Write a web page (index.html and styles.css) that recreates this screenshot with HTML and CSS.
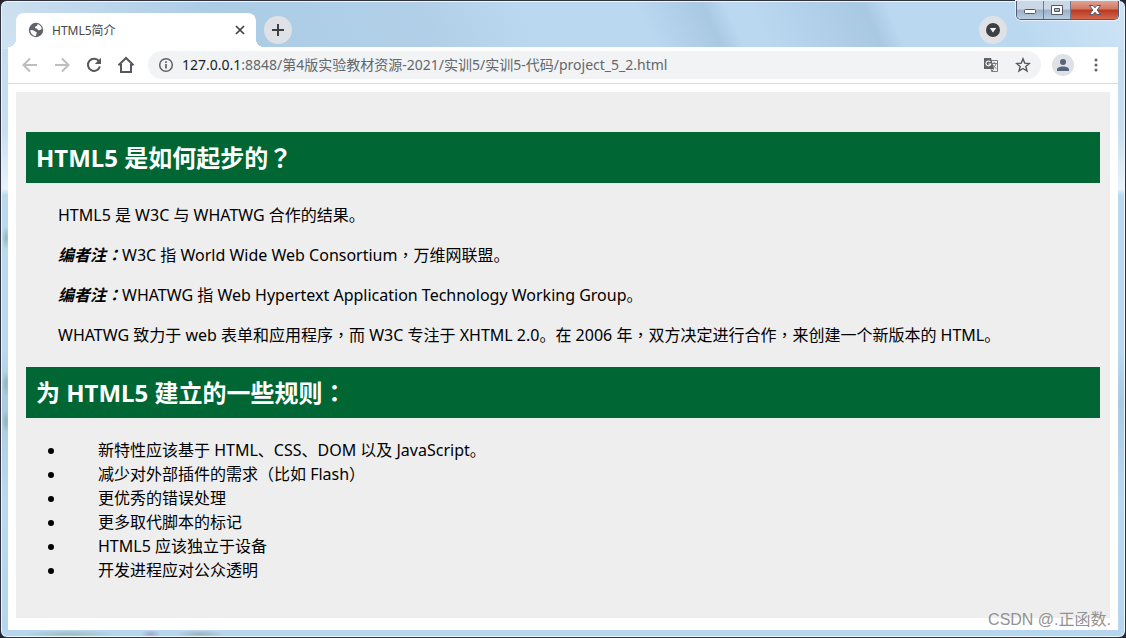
FILE: index.html
```
<!DOCTYPE html>
<html lang="zh-CN">
<head>
<meta charset="utf-8">
<title>HTML5简介</title>
<link rel="stylesheet" href="styles.css">
</head>
<body>
<div class="window">
  <header class="titlebar">
    <div class="tab">
      <svg class="globe" viewBox="0 0 16 16" aria-hidden="true"><circle cx="8" cy="8" r="7.2" fill="#5f6368"/><path d="M2.300 8 5 8.200 7.200 9.600 8.900 10.400 8.300 12 8 14C4.900 14 2.400 11.500 2.300 8ZM9.500 1.900 9.200 3.700 7.300 4.600 7 6.200 9 6.600 10.200 8.200 12 8.100 13.800 7C13.500 4.400 11.800 2.400 9.500 1.900Z" fill="#fff"/></svg>
      <span class="tab-title">HTML5简介</span>
      <button class="plain close-tab" aria-label="关闭标签页"><svg width="16" height="16" viewBox="0 0 16 16"><path d="m4 4 8 8m0-8-8 8" stroke="#3c4043" stroke-width="1.700"/></svg></button>
    </div>
    <button class="round new-tab" aria-label="新标签页"><svg width="16" height="16" viewBox="0 0 16 16"><path d="M8 2v12M2 8h12" stroke="#3c4043" stroke-width="2"/></svg></button>
    <button class="round tab-search" aria-label="搜索标签页"><svg width="16" height="16" viewBox="0 0 16 16"><circle cx="8" cy="8" r="7" fill="#3c4043"/><path d="M4.800 6h6.400L8 10.500Z" fill="#fff"/></svg></button>
    <div class="controls">
      <button aria-label="最小化"><svg width="14" height="10" viewBox="0 0 14 10"><rect x="1.500" y="4.500" width="11" height="4" rx="1" fill="#fff" stroke="#535666"/></svg></button>
      <button aria-label="最大化"><svg width="14" height="12" viewBox="0 0 14 12"><path d="M1.500 1.500h11v9h-11Zm3 3v3h5v-3Z" fill="#fff" fill-rule="evenodd" stroke="#535666"/></svg></button>
      <button class="close" aria-label="关闭"><svg width="14" height="12" viewBox="0 0 14 12"><path d="M1.500 1.500h3.700L7 3.800l1.800-2.300h3.700L9.200 6l3.300 4.500H8.800L7 8.200l-1.800 2.300H1.500L4.800 6Z" fill="#fff" stroke="#535666"/></svg></button>
    </div>
  </header>
  <main class="client">
    <nav class="toolbar">
      <button class="plain" aria-label="后退"><svg width="18" height="18" viewBox="0 0 18 18" fill="none" stroke="#bdbec0" stroke-width="2"><path d="M16 9H3M9 2.500 2.500 9 9 15.500"/></svg></button>
      <button class="plain" aria-label="前进"><svg width="18" height="18" viewBox="0 0 18 18" fill="none" stroke="#bdbec0" stroke-width="2"><path d="M2 9h13M9 2.500 15.500 9 9 15.500"/></svg></button>
      <button class="plain" aria-label="重新加载"><svg width="18" height="18" viewBox="0 0 18 18"><path d="M14 5.200A6.100 6.100 0 1 0 14.900 10.500" fill="none" stroke="#55585c" stroke-width="2"/><path d="M16 1.800V8H9.800Z" fill="#55585c"/></svg></button>
      <button class="plain" aria-label="主页"><svg width="18" height="18" viewBox="0 0 18 18"><path d="M1.500 9.300 9 2l7.500 7.300M4 8v8h10V8" fill="none" stroke="#55585c" stroke-width="2"/></svg></button>
      <div class="address">
        <svg width="16" height="16" viewBox="0 0 16 16"><circle cx="8" cy="8" r="6.300" fill="none" stroke="#5f6368" stroke-width="1.500"/><path d="M8 7v4.500M8 4.300v1.600" stroke="#5f6368" stroke-width="1.700"/></svg>
        <div class="url"><span class="host">127.0.0.1</span>:8848/第4版实验教材资源-2021/实训5/实训5-代码/project_5_2.html</div>
        <button class="plain" aria-label="翻译此页"><svg width="16" height="16" viewBox="0 0 16 16"><path d="M5.500 3.500h9v11h-6" fill="#f1f3f4" stroke="#777a7e"/><path d="M1 1h7l3 11H1Z" fill="#5f6368"/><path d="M7.300 5A2.400 2.400 0 1 0 7.700 7H5.500" fill="none" stroke="#fff" stroke-width="1.100"/><path d="M8.500 6.500h5.500M11.200 5v1.500M13 6.500c-.5 2-1.500 3.500-3 4.500M10 8c.800 1.500 2 2.800 3.500 3.700M8 12l1 2.500 1.500-2.500" fill="none" stroke="#777a7e"/></svg></button>
        <button class="plain" aria-label="收藏"><svg width="16" height="16" viewBox="0 0 16 16"><path d="m8 1.800 1.700 4.300 4.700.4-3.600 3 1.200 4.500L8 11.500 4 14l1.200-4.500-3.600-3 4.700-.4Z" fill="none" stroke="#55585c" stroke-width="1.400"/></svg></button>
      </div>
      <button class="avatar" aria-label="用户"><svg width="14" height="14" viewBox="0 0 14 14" fill="#55647a"><circle cx="7" cy="4" r="3"/><path d="M1 13v-1.500C1 9.500 4 8.500 7 8.500s6 1 6 3V13Z"/></svg></button>
      <button class="plain menu" aria-label="菜单"><svg width="4" height="16" viewBox="0 0 4 16" fill="#5f6368"><circle cx="2" cy="3" r="1.500"/><circle cx="2" cy="8" r="1.500"/><circle cx="2" cy="13" r="1.500"/></svg></button>
    </nav>
    <article class="page">
      <h2>HTML5 是如何起步的<span class="mid" lang="zh-TW">？</span></h2>
      <p>HTML5 是 W3C 与 WHATWG 合作的结果。</p>
      <p><em>编者注<span class="mid" lang="zh-TW">：</span></em>W3C 指 World Wide Web Consortium<span class="mid" lang="zh-TW">，</span>万维网联盟。</p>
      <p><em>编者注<span class="mid" lang="zh-TW">：</span></em>WHATWG 指 Web Hypertext Application Technology Working Group。</p>
      <p>WHATWG 致力于 web 表单和应用程序<span class="mid" lang="zh-TW">，</span>而 W3C 专注于 XHTML 2.0。在 2006 年<span class="mid" lang="zh-TW">，</span>双方决定进行合作<span class="mid" lang="zh-TW">，</span>来创建一个新版本的 HTML。</p>
      <h2>为 HTML5 建立的一些规则<span class="mid" lang="zh-TW">：</span></h2>
      <ul>
        <li>新特性应该基于 HTML、CSS、DOM 以及 JavaScript。</li>
        <li>减少对外部插件的需求（比如 Flash）</li>
        <li>更优秀的错误处理</li>
        <li>更多取代脚本的标记</li>
        <li>HTML5 应该独立于设备</li>
        <li>开发进程应对公众透明</li>
      </ul>
    </article>
  </main>
  <div class="watermark">CSDN @.正函数.</div>
</div>
</body>
</html>
```
FILE: styles.css
```
* { box-sizing: border-box; }
html { background: #23242e; }
body {
  margin: 0;
  font-family: "Noto Sans", "Noto Sans CJK SC", sans-serif;
  color: #000;
}
button {
  display: grid;
  place-items: center;
  padding: 0;
  border: 0;
  font: inherit;
}
svg { display: block; flex: none; }

.window {
  position: relative;
  display: flex;
  flex-direction: column;
  min-height: 100vh;
  padding: 0 6px 6px;
  border: 1px solid #30323e;
  border-radius: 7px;
  box-shadow: inset 0 0 0 1px #edf6fd;
  background:
    radial-gradient(ellipse at center, #93b7b6 0, transparent 70%) 1px 225px / 8px 24px no-repeat,
    radial-gradient(ellipse at center, #8fb4b6 0, transparent 70%) 1px 370px / 8px 26px no-repeat,
    radial-gradient(ellipse at center, #8fb4b6 0, transparent 70%) 1px 408px / 8px 24px no-repeat,
    radial-gradient(ellipse at center, #9dbdc0 0, transparent 70%) 24px 629px / 90px 8px no-repeat,
    radial-gradient(ellipse at center, #a5a5cc 0, transparent 70%) 140px 629px / 20px 8px no-repeat,
    radial-gradient(ellipse at center, #9fb2bb 0, transparent 70%) 174px 629px / 50px 8px no-repeat,
    linear-gradient(65deg, #cfe2f1 0, #accce6 20%, #b1d0e8 38%, #bad9f1 47%, #bad9f1 57%, #a9c8e1 63%, #bad9f1 65%, #bad9f1 67%, #a9c8e1 77%, #bad9f1 79%, #bad9f1 90%, #cfe4f5 100%) 0 0 / 100% 48px no-repeat,
    linear-gradient(#c3dcf1 48px, #c8dff2 130px, #e8f2fa 188px, #bad9f1 194px, #bad9f1 350px, #aacae3 400px, #bad9f1 500px, #b6d6ee 100%);
}

.titlebar {
  display: flex;
  align-items: flex-start;
  height: 46px;
  padding-left: 9px;
}
.tab {
  position: relative;
  display: flex;
  align-items: center;
  width: 240px;
  height: 34px;
  margin-top: 12px;
  padding: 0 8px 0 12px;
  border-radius: 8px 8px 0 0;
  background: #fff;
}
.tab::before, .tab::after {
  content: "";
  position: absolute;
  bottom: 0;
  width: 8px;
  height: 8px;
}
.tab::before {
  right: 100%;
  background: radial-gradient(circle at 0 0, transparent 8px, #fff 8px);
}
.tab::after {
  left: 100%;
  background: radial-gradient(circle at 100% 0, transparent 8px, #fff 8px);
}
.globe { width: 16px; height: 16px; }
.tab-title {
  flex: 1;
  margin-left: 8px;
  font-size: 12px;
  color: #45474a;
}
.plain { background: transparent; }
.round {
  width: 28px;
  height: 28px;
  margin-top: 15px;
  border-radius: 50%;
  background: #dee1e6;
}
.new-tab { margin-left: 8px; }
.tab-search { margin-left: auto; margin-right: 9px; }
.controls {
  display: flex;
  height: 19px;
  border: 1px solid #535a6c;
  border-top: 0;
  border-radius: 0 0 5px 5px;
  overflow: hidden;
  box-shadow: 0 0 0 1px #e4eff9;
}
.controls button {
  width: 27px;
  border-right: 1px solid #6d7a8e;
  background: linear-gradient(#cbd7e5 0 45%, #9cafc5 50%, #b8cddf);
}
.controls .close {
  width: 47px;
  border-right: 0;
  background: linear-gradient(#e5a091 0, #d17862 45%, #b93822 50%, #d3684c);
}

.client {
  flex: 1;
  display: flex;
  flex-direction: column;
  margin: 0 1px 1px;
  background: #fff;
}
.toolbar {
  display: flex;
  align-items: center;
  gap: 14px;
  height: 37px;
  padding: 0 20px 0 13px;
  border-bottom: 1px solid #d9dadc;
}
.address {
  flex: 1;
  display: flex;
  align-items: center;
  gap: 16px;
  height: 28px;
  margin-left: -1px;
  padding: 0 10px;
  border-radius: 14px;
  background: #f1f3f4;
}
.url {
  flex: 1;
  margin-left: -8px;
  font-size: 14px;
  line-height: 20px;
  white-space: nowrap;
  color: #64686c;
}
.host { color: #202124; }
.avatar {
  width: 22px;
  height: 22px;
  margin-left: -3px;
  border-radius: 50%;
  background: #dee1e6;
}
.menu { margin-left: 6px; }

.page {
  flex: 1;
  margin: 8px 8px 12px;
  padding: 40px 10px 20px;
  background: #eee;
  font-size: 16px;
  line-height: 24px;
}
.page h2 {
  margin: 0 0 20px;
  padding: 10px;
  background: #006633;
  font-size: 24px;
  line-height: 31px;
  color: #fff;
}
.page p { margin: 0 0 16px; text-indent: 2em; }
.page p + h2 { margin-top: 20px; }
.page em { font-weight: bold; }
.page ul { margin: 0 0 16px; padding-left: 40px; }
.page li { text-indent: 2em; }
.mid {
  font-family: "Noto Sans CJK TC", sans-serif;
  line-height: 1;
}

.watermark {
  position: absolute;
  right: 14px;
  bottom: 7px;
  font-family: "Liberation Sans", "Noto Sans CJK SC", sans-serif;
  font-size: 16px;
  line-height: 20px;
  color: #929292;
}
```
